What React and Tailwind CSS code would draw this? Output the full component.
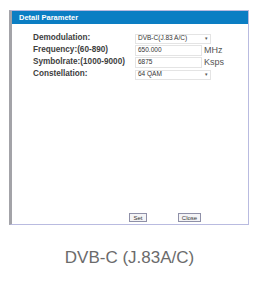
import React from 'react'

const ROWS = [
  { label: 'Demodulation:', value: 'DVB-C(J.83 A/C)', kind: 'select' },
  { label: 'Frequency:(60-890)', value: '650.000', kind: 'input', unit: 'MHz' },
  { label: 'Symbolrate:(1000-9000)', value: '6875', kind: 'input', unit: 'Ksps' },
  { label: 'Constellation:', value: '64 QAM', kind: 'select' },
]

function Field({ row }) {
  if (row.kind === 'select') {
    return (
      <div className="flex h-[10px] w-[76px] items-center justify-between border border-[#e4e4e4] bg-white pl-[2px] pr-[2px] text-[6.5px] leading-none text-[#333]">
        <span>{row.value}</span>
        <span className="text-[5px] text-[#555]">▾</span>
      </div>
    )
  }
  return (
    <div className="flex items-center">
      <div className="flex h-[11px] w-[67px] items-center border border-[#e4e4e4] bg-white pl-[2px] text-[6.5px] leading-none text-[#333]">
        {row.value}
      </div>
      <span className="ml-[2px] text-[9px] leading-none text-[#555]">{row.unit}</span>
    </div>
  )
}

export default function App() {
  return (
    <div className="h-[286px] w-[271px] bg-white" style={{ fontFamily: '"Liberation Sans", Arial, sans-serif' }}>
      <div className="h-[10px]" />
      <div className="ml-[9px] flex h-[215px] w-[240px] flex-col border border-l-[3px] border-[#b9bbe0] border-l-[#a3a3a8] bg-white">
        <div className="flex h-[13px] items-center bg-[#0b7ec3] pl-[7px] text-[7.5px] font-bold leading-none text-white">
          Detail Parameter
        </div>
        <div className="flex flex-col gap-[1px] pl-[21px] pt-[9px]">
          {ROWS.map((row) => (
            <div key={row.label} className="flex h-[11px] items-center">
              <div className="w-[102px] whitespace-nowrap text-[8.2px] font-bold leading-none text-[#3e3e3e]">
                {row.label}
              </div>
              <Field row={row} />
            </div>
          ))}
        </div>
        <div className="flex-1" />
        <div className="mb-[2px] flex items-center pl-[117px]">
          <div className="flex h-[9px] w-[18px] items-center justify-center border border-[#8f90a8] bg-[#f4f4f6] text-[6px] leading-none text-[#333]">
            Set
          </div>
          <div className="ml-[31px] flex h-[9px] w-[23px] items-center justify-center border border-[#8f90a8] bg-[#f4f4f6] text-[6px] leading-none text-[#333]">
            Close
          </div>
        </div>
      </div>
      <div className="mt-[23px] w-[259px] text-center text-[17px] leading-[20px] text-[#6b6b6b]">
        DVB-C (J.83A/C)
      </div>
    </div>
  )
}
